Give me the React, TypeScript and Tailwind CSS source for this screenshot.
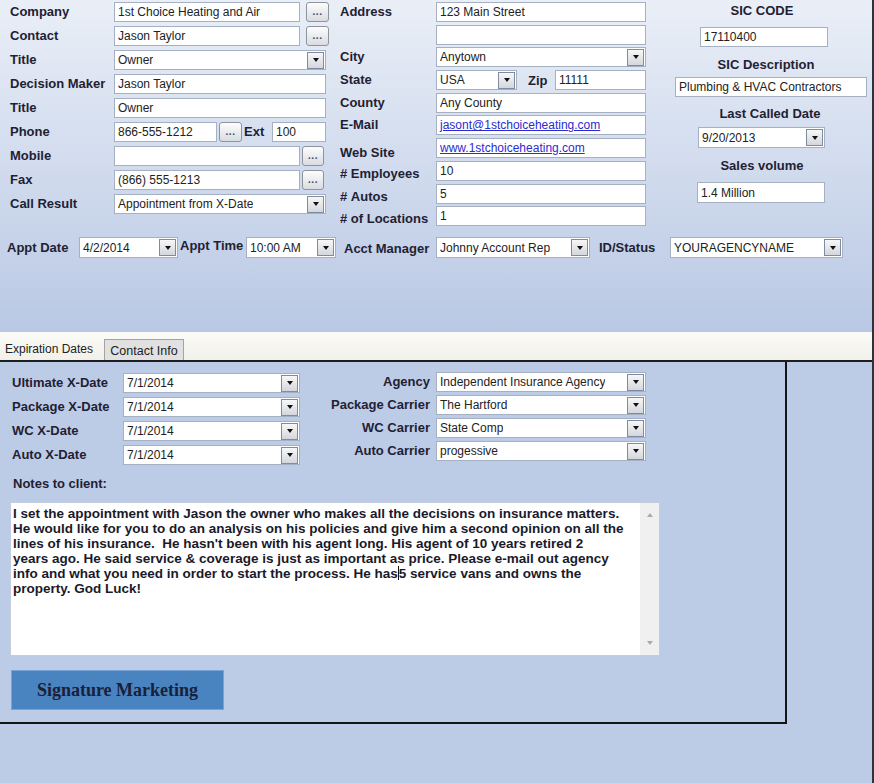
import React from "react";
import { twMerge } from "tailwind-merge";

const L = ({ children, className = "" }: { children?: React.ReactNode; className?: string }) => (
  <span className={twMerge("font-bold text-[13px] leading-[16px] text-[#1f2133] whitespace-nowrap shrink-0", className)}>
    {children}
  </span>
);

const Box = ({ children, className = "" }: { children?: React.ReactNode; className?: string }) => (
  <div
    className={twMerge(
      "h-[20px] shrink-0 bg-white border border-[#a5b0c2] flex items-center pl-[3px] text-[12px] text-[#222] overflow-hidden whitespace-nowrap",
      className
    )}
  >
    {children}
  </div>
);

const Arrow = () => (
  <span className="h-[17px] w-[17px] shrink-0 border border-[#7f8ba0] bg-linear-to-b from-[#f7f7f7] to-[#d3d7dd] flex items-center justify-center">
    <span className="w-0 h-0 border-x-[3.5px] border-x-transparent border-t-[4px] border-t-[#111]" />
  </span>
);

const Sel = ({ children, className = "" }: { children?: React.ReactNode; className?: string }) => (
  <Box className={twMerge("justify-between pr-[1px]", className)}>
    <span className="overflow-hidden">{children}</span>
    <Arrow />
  </Box>
);

const Ell = ({ className = "" }: { className?: string }) => (
  <span
    className={twMerge(
      "h-[20px] w-[23px] shrink-0 rounded-[3px] border border-[#8d949e] bg-linear-to-b from-[#fdfdfd] to-[#d9dce2] flex items-end justify-center pb-[4px] text-[10px] font-bold leading-none text-[#3a4660] tracking-[0.5px]",
      className
    )}
  >
    ...
  </span>
);

const Link = ({ children }: { children: React.ReactNode }) => (
  <span className="text-[#2b2bd1] underline">{children}</span>
);

const Row = ({ children, className = "" }: { children: React.ReactNode; className?: string }) => (
  <div className={twMerge("flex items-center h-[20px]", className)}>{children}</div>
);

export default function App() {
  return (
    <div className="w-[874px] h-[783px] bg-[#bccbe6] font-['Liberation_Sans',Arial,sans-serif] overflow-hidden border-r-2 border-[#2d3440]">
      {/* Top panel */}
      <div className="h-[332px] bg-linear-to-b from-[#eaeff7] to-[#b9c8e4] flex flex-col">
        <div className="h-[237px] flex">
          {/* Column 1 */}
          <div className="w-[340px] pl-[10px] pt-[2px] flex flex-col gap-[4px]">
            <Row>
              <L className="w-[104px]">Company</L>
              <Box className="w-[186px]">1st Choice Heating and Air</Box>
              <Ell className="ml-[6px]" />
            </Row>
            <Row>
              <L className="w-[104px]">Contact</L>
              <Box className="w-[186px]">Jason Taylor</Box>
              <Ell className="ml-[6px]" />
            </Row>
            <Row>
              <L className="w-[104px]">Title</L>
              <Sel className="w-[212px]">Owner</Sel>
            </Row>
            <Row>
              <L className="w-[104px]">Decision Maker</L>
              <Box className="w-[212px]">Jason Taylor</Box>
            </Row>
            <Row>
              <L className="w-[104px]">Title</L>
              <Box className="w-[212px]">Owner</Box>
            </Row>
            <Row>
              <L className="w-[104px]">Phone</L>
              <Box className="w-[103px]">866-555-1212</Box>
              <Ell className="ml-[2px]" />
              <L className="ml-[2px] w-[28px]">Ext</L>
              <Box className="w-[54px]">100</Box>
            </Row>
            <Row>
              <L className="w-[104px]">Mobile</L>
              <Box className="w-[186px]" />
              <Ell className="ml-[2px] w-[22px]" />
            </Row>
            <Row>
              <L className="w-[104px]">Fax</L>
              <Box className="w-[186px]">(866) 555-1213</Box>
              <Ell className="ml-[2px] w-[22px]" />
            </Row>
            <Row>
              <L className="w-[104px]">Call Result</L>
              <Sel className="w-[212px]">Appointment from X-Date</Sel>
            </Row>
          </div>

          {/* Column 2 */}
          <div className="w-[330px] pt-[2px] flex flex-col gap-[2.7px]">
            <Row>
              <L className="w-[96px]">Address</L>
              <Box className="w-[210px]">123 Main Street</Box>
            </Row>
            <Row>
              <L className="w-[96px]" />
              <Box className="w-[210px]" />
            </Row>
            <Row>
              <L className="w-[96px]">City</L>
              <Sel className="w-[210px]">Anytown</Sel>
            </Row>
            <Row>
              <L className="w-[96px]">State</L>
              <Sel className="w-[81px]">USA</Sel>
              <L className="ml-[11px] w-[27px] pt-[2px]">Zip</L>
              <Box className="w-[91px]">11111</Box>
            </Row>
            <Row>
              <L className="w-[96px]">County</L>
              <Box className="w-[210px]">Any County</Box>
            </Row>
            <Row>
              <L className="w-[96px]">E-Mail</L>
              <Box className="w-[210px]">
                <Link>jasont@1stchoiceheating.com</Link>
              </Box>
            </Row>
            <Row>
              <L className="w-[96px] pt-[9px]">Web Site</L>
              <Box className="w-[210px]">
                <Link>www.1stchoiceheating.com</Link>
              </Box>
            </Row>
            <Row>
              <L className="w-[96px] pt-[7px]">#&nbsp;Employees</L>
              <Box className="w-[210px]">10</Box>
            </Row>
            <Row>
              <L className="w-[96px] pt-[6px]">#&nbsp;Autos</L>
              <Box className="w-[210px]">5</Box>
            </Row>
            <Row>
              <L className="w-[96px] pt-[6px]">#&nbsp;of Locations</L>
              <Box className="w-[210px]">1</Box>
            </Row>
          </div>

          {/* Column 3 */}
          <div className="w-[184px] pt-[3px] flex flex-col">
            <L className="text-center h-[16px]">SIC CODE</L>
            <Box className="mt-[8px] ml-[30px] w-[128px]">17110400</Box>
            <L className="text-center h-[16px] mt-[10px] pl-[8px]">SIC Description</L>
            <Box className="mt-[4px] ml-[5px] w-[192px]">Plumbing &amp; HVAC Contractors</Box>
            <L className="text-center h-[16px] mt-[9px] pl-[16px]">Last Called Date</L>
            <Sel className="mt-[5px] ml-[28px] w-[127px] h-[21px]">9/20/2013</Sel>
            <L className="text-center h-[16px] mt-[10px]">Sales volume</L>
            <Box className="mt-[8px] ml-[27px] w-[128px] h-[21px]">1.4 Million</Box>
          </div>
        </div>

        {/* Appointment row */}
        <div className="h-[21px] flex items-center pl-[7px]">
          <L className="w-[72px]">Appt Date</L>
          <Sel className="w-[99px] h-[21px]">4/2/2014</Sel>
          <L className="ml-[2px] w-[66px] pb-[3px]">Appt Time</L>
          <Sel className="w-[90px] h-[21px]">10:00 AM</Sel>
          <L className="ml-[8px] w-[92px] pt-[2px]">Acct Manager</L>
          <Sel className="w-[154px] h-[21px]">Johnny Account Rep</Sel>
          <L className="ml-[9px] w-[71px]">ID/Status</L>
          <Sel className="w-[173px] h-[21px]">YOURAGENCYNAME</Sel>
        </div>
      </div>

      {/* Tab strip */}
      <div className="h-[30px] bg-linear-to-b from-[#fbfbf8] to-[#f1f0ea] border-b-2 border-[#1e1e1e] flex items-end">
        <div className="h-[22px] w-[104px] pl-[5px] flex items-center text-[12px] text-[#222]">Expiration Dates</div>
        <div className="h-[21px] w-[80px] border border-b-0 border-[#a3a3a3] bg-[#e1e1e1] flex items-center justify-center pt-[2px] text-[12.5px] text-[#222]">
          Contact Info
        </div>
      </div>

      {/* Tab panel */}
      <div className="w-[787px] h-[362px] border-r-2 border-b-2 border-[#141414] flex flex-col">
        <div className="flex items-start">
          <div className="pl-[12px] pt-[11px] flex flex-col gap-[4px]">
            {["Ultimate X-Date", "Package X-Date", "WC X-Date", "Auto X-Date"].map((l) => (
              <Row key={l}>
                <L className="w-[111px]">{l}</L>
                <Sel className="w-[177px]">7/1/2014</Sel>
              </Row>
            ))}
          </div>
          <div className="pt-[10px] flex flex-col gap-[3px]">
            {[
              ["Agency", "Independent Insurance Agency"],
              ["Package Carrier", "The Hartford"],
              ["WC Carrier", "State Comp"],
              ["Auto Carrier", "progessive"],
            ].map(([l, v]) => (
              <Row key={l}>
                <L className="w-[130px] text-right">{l}</L>
                <Sel className="ml-[6px] w-[210px]">{v}</Sel>
              </Row>
            ))}
          </div>
        </div>

        <L className="mt-[11px] ml-[13px]">Notes to client:</L>

        <div className="mt-[10px] ml-[10px] w-[650px] h-[154px] bg-white border border-[#c3cde0] flex">
          <div className="flex-1 pl-[2px] pt-[3px] font-bold text-[13.5px] leading-[15px] text-[#1a1a2a] whitespace-pre">
            <div>I set the appointment with Jason the owner who makes all the decisions on insurance matters.</div>
            <div>He would like for you to do an analysis on his policies and give him a second opinion on all the</div>
            <div>lines of his insurance.  He hasn't been with his agent long. His agent of 10 years retired 2</div>
            <div>years ago. He said service &amp; coverage is just as important as price. Please e-mail out agency</div>
            <div>
              info and what you need in order to start the process. He has
              <span className="inline-block w-[1px] h-[14px] bg-[#111] align-[-2px]" />5 service vans and owns the
            </div>
            <div>property. God Luck!</div>
          </div>
          <div className="w-[19px] bg-[#f0f0f0] flex flex-col items-center justify-between pt-[10px] pb-[10px]">
            <span className="w-0 h-0 border-x-[3.5px] border-x-transparent border-b-[4px] border-b-[#a9a9a9]" />
            <span className="w-0 h-0 border-x-[3.5px] border-x-transparent border-t-[4px] border-t-[#a9a9a9]" />
          </div>
        </div>

        <div className="mt-[14px] ml-[11px] w-[213px] h-[40px] bg-[#4a84c0] border border-[#78a3d4] flex items-center justify-center font-['Liberation_Serif',serif] font-bold text-[18px] text-[#18203a]">
          Signature Marketing
        </div>
      </div>
    </div>
  );
}
